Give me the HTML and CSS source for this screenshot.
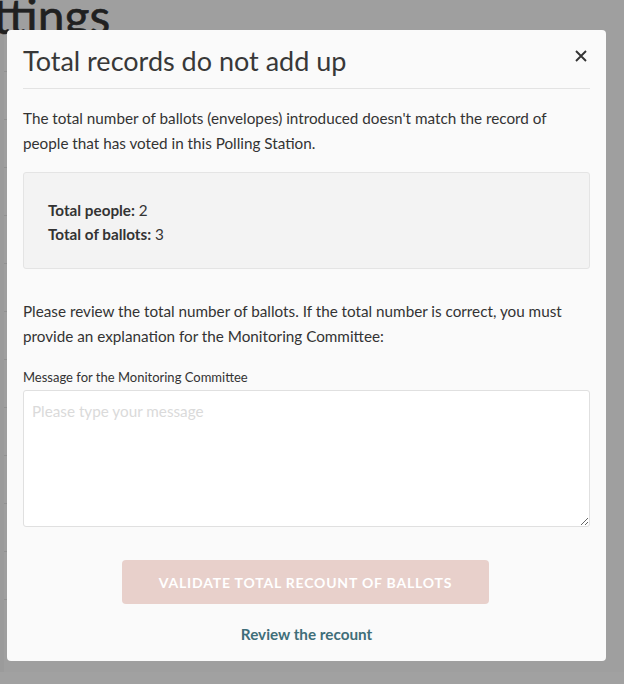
FILE: index.html
```html
<!DOCTYPE html>
<html lang="en">
<head>
<meta charset="utf-8">
<title>Total records do not add up</title>
<link rel="stylesheet" href="styles.css">
</head>
<body>
<div class="page">
  <h1 class="page-title">Settings</h1>
  <div class="page-rows">
    <div class="row"></div><div class="row"></div><div class="row"></div><div class="row"></div>
    <div class="row"></div><div class="row"></div><div class="row"></div><div class="row"></div>
    <div class="row"></div><div class="row"></div><div class="row"></div><div class="row"></div>
  </div>
</div>
<div class="overlay">
  <div class="modal" role="dialog">
    <div class="modal-header">
      <h2 class="modal-title">Total records do not add up</h2>
      <button class="close" aria-label="Close">
        <svg width="14" height="14" viewBox="0 0 14 14"><path d="M2 2 L12 12 M12 2 L2 12" stroke="#333" stroke-width="1.9" fill="none"/></svg>
      </button>
    </div>
    <div class="modal-body">
      <p class="text">The total number of ballots (envelopes) introduced doesn't match the record of people that has voted in this Polling Station.</p>
      <div class="summary">
        <div><strong>Total people:</strong> 2</div>
        <div><strong>Total of ballots:</strong> 3</div>
      </div>
      <p class="text second">Please review the total number of ballots. If the total number is correct, you must provide an explanation for the Monitoring Committee:</p>
      <label class="label" for="msg">Message for the Monitoring Committee</label>
      <textarea id="msg" class="field" placeholder="Please type your message"></textarea>
      <div class="actions">
        <button class="validate" disabled>Validate total recount of ballots</button>
        <a class="review" href="#">Review the recount</a>
      </div>
    </div>
  </div>
</div>
</body>
</html>
```

FILE: styles.css
```css
html, body {
  margin: 0;
  padding: 0;
}
body {
  width: 624px;
  height: 684px;
  overflow: hidden;
  font-family: Lato, "Open Sans", sans-serif;
  color: #333;
  position: relative;
}
.page {
  background: #fcfcfc;
  height: 684px;
  border-left: 4px solid #f6f6f6;
  box-sizing: border-box;
}
.page-title {
  margin: -12px 0 0 -62px;
  font-size: 48px;
  font-weight: 400;
  line-height: 56px;
  color: #333;
  -webkit-text-stroke: 0.6px #333;
}
.page-rows {
  margin-top: 27px;
  margin-right: 24px;
}
.row {
  height: 47px;
  border-top: 1px solid #e6e6e6;
}
.overlay {
  position: absolute;
  inset: 0;
  background: rgba(0, 0, 0, 0.37);
}
.modal {
  position: absolute;
  left: 7px;
  top: 30px;
  width: 599px;
  background: #fafafa;
  border-radius: 4px;
  box-sizing: border-box;
  padding: 0 16px 15px;
}
.modal-header {
  display: flex;
  align-items: center;
  justify-content: space-between;
  height: 58px;
  border-bottom: 1px solid #e3e3e3;
}
.modal-title {
  margin: 0;
  font-size: 27px;
  font-weight: 400;
  color: #383838;
  line-height: 34px;
  padding-top: 3px;
}
.close {
  border: 0;
  background: none;
  padding: 0;
  margin-right: 2px;
  width: 14px;
  height: 14px;
  display: flex;
  margin-top: -6px;
}
.modal-body {
  padding-top: 17px;
}
.text {
  margin: 0;
  font-size: 15.25px;
  line-height: 25px;
  color: #333;
}
.summary {
  margin-top: 16px;
  background: #f3f3f3;
  border: 1px solid #e4e4e4;
  border-radius: 3px;
  padding: 25px 24px 22px;
  font-size: 15.25px;
  line-height: 24px;
}
.summary strong {
  font-weight: 700;
}
.text.second {
  margin-top: 30px;
}
.label {
  display: block;
  margin-top: 19px;
  font-size: 13px;
  line-height: 18px;
  color: #333;
}
.field {
  display: block;
  margin-top: 4px;
  width: 100%;
  height: 137px;
  box-sizing: border-box;
  border: 1px solid #e0e0e0;
  border-radius: 3px;
  background: #fff;
  padding: 8px 8px;
  font-family: inherit;
  font-size: 15.25px;
  line-height: 24px;
  color: #333;
  resize: vertical;
}
.field::placeholder {
  color: #dadada;
}
.actions {
  display: flex;
  flex-direction: column;
  align-items: center;
  margin-top: 33px;
}
.validate {
  width: 367px;
  height: 44px;
  border: 0;
  border-radius: 4px;
  background: #e8d0cb;
  color: #fff;
  font-family: inherit;
  font-size: 14px;
  font-weight: 700;
  letter-spacing: 0.8px;
  text-transform: uppercase;
  margin-right: 2px;
}
.review {
  margin-top: 18px;
  font-size: 15.25px;
  line-height: 24px;
  font-weight: 700;
  color: #3f6e79;
  text-decoration: none;
}
```
